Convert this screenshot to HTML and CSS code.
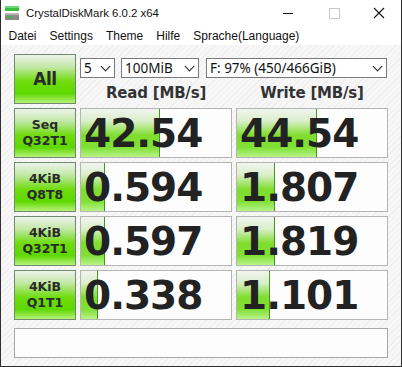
FILE: index.html
```html
<!DOCTYPE html>
<html lang="de">
<head>
    <meta charset="UTF-8">
    <title>CrystalDiskMark 6.0.2 x64</title>
    <link rel="stylesheet" href="styles.css">
</head>
<body>
<div class="window">
    <div class="titlebar">
        <svg class="app-icon" width="16" height="16" viewBox="0 0 16 16">
            <rect x="1" y="1" width="14" height="5" fill="#3dbb3d"/>
            <rect x="1" y="1" width="14" height="2" fill="#6fd86f"/>
            <rect x="1" y="8" width="14" height="7" fill="#8a8a8a"/>
            <rect x="1" y="8" width="14" height="2" fill="#b8b8b8"/>
            <rect x="3" y="11" width="4" height="2" fill="#3dbb3d"/>
        </svg>
        <span class="title">CrystalDiskMark 6.0.2 x64</span>
        <div class="controls">
            <span class="ctl ctl-min"></span>
            <span class="ctl ctl-max"></span>
            <span class="ctl ctl-close">
                <svg width="12" height="12" viewBox="0 0 12 12"><path d="M1 1L11 11M11 1L1 11" stroke="#111" stroke-width="1.1"/></svg>
            </span>
        </div>
    </div>
    <div class="menubar">
        <span>Datei</span>
        <span>Settings</span>
        <span>Theme</span>
        <span>Hilfe</span>
        <span>Sprache(Language)</span>
    </div>

    <div class="main">
        <div class="grid">
            <button class="btn btn-all">All</button>
            <div class="head">
                <div class="selects">
                    <div class="select sel-count">5<span class="chev"></span></div>
                    <div class="select sel-size">100MiB<span class="chev"></span></div>
                    <div class="select sel-drive">F: 97% (450/466GiB)<span class="chev"></span></div>
                </div>
                <div class="labels">
                    <div class="label">Read [MB/s]</div>
                    <div class="label">Write [MB/s]</div>
                </div>
            </div>

            <button class="btn">Seq<br>Q32T1</button>
            <div class="cell"><div class="bar" style="width:78px"></div><span class="val">42.54</span></div>
            <div class="cell"><div class="bar" style="width:79px"></div><span class="val">44.54</span></div>

            <button class="btn">4KiB<br>Q8T8</button>
            <div class="cell"><div class="bar" style="width:23px"></div><span class="val">0.594</span></div>
            <div class="cell"><div class="bar" style="width:37px"></div><span class="val">1.807</span></div>

            <button class="btn">4KiB<br>Q32T1</button>
            <div class="cell"><div class="bar" style="width:23px"></div><span class="val">0.597</span></div>
            <div class="cell"><div class="bar" style="width:37px"></div><span class="val">1.819</span></div>

            <button class="btn">4KiB<br>Q1T1</button>
            <div class="cell"><div class="bar" style="width:16px"></div><span class="val">0.338</span></div>
            <div class="cell"><div class="bar" style="width:32px"></div><span class="val">1.101</span></div>
        </div>
        <div class="status"></div>
    </div>
</div>
</body>
</html>
```

FILE: styles.css
```css
body {
    margin: 0;
    font-family: "Liberation Sans", Arial, sans-serif;
}
.window {
    width: 402px;
    height: 367px;
    box-sizing: border-box;
    border: 1px solid #2e2e2e;
    border-top: none;
    background: repeating-linear-gradient(135deg, #f7f7f7 0, #f7f7f7 3px, #efefef 3px, #efefef 4px);
}
.titlebar {
    height: 26px;
    background: #fff;
    display: flex;
    align-items: center;
}
.app-icon {
    margin-left: 3px;
    margin-right: 6px;
}
.title {
    font-size: 11.4px;
    color: #111;
}
.controls {
    margin-left: auto;
    display: flex;
    height: 26px;
}
.ctl {
    width: 46px;
    display: flex;
    align-items: center;
    justify-content: center;
}
.ctl-min::before {
    content: "";
    width: 10px;
    height: 1px;
    background: #111;
}
.ctl-max::before {
    content: "";
    width: 9px;
    height: 9px;
    border: 1px solid #c8c8c8;
}
.ctl-close {
    width: 44px;
}
.menubar {
    height: 19px;
    background: #fff;
    display: flex;
    align-items: center;
    font-size: 12px;
    color: #111;
    padding-left: 1px;
}
.menubar span {
    padding: 0 6.5px;
}
.main {
    padding: 9px 0 0 13px;
}
.grid {
    display: grid;
    grid-template-columns: 62px 152px 152px;
    grid-auto-rows: 50px;
    gap: 4px;
}
.btn {
    margin: 0;
    padding: 0;
    border: 1px solid #6f8a6f;
    background: linear-gradient(to bottom, #edf3ea 0%, #c2e8a6 25%, #6fdc0e 55%, #5ed800 80%, #b6f27a 100%);
    font-family: "DejaVu Sans", sans-serif;
    font-weight: bold;
    font-size: 12.5px;
    line-height: 16px;
    color: #2a2a2a;
}
.btn-all {
    font-size: 17px;
    letter-spacing: -0.5px;
}
.head {
    grid-column: span 2;
    display: flex;
    flex-direction: column;
}
.selects {
    display: flex;
    margin-top: 4px;
    height: 20px;
}
.select {
    box-sizing: border-box;
    height: 20px;
    border: 1px solid #7a7a7a;
    background: #fff;
    font-family: "Noto Sans", sans-serif;
    font-size: 13.5px;
    line-height: 18px;
    padding-left: 3px;
    color: #111;
    position: relative;
}
.chev {
    position: absolute;
    right: 5px;
    top: 4px;
    width: 6px;
    height: 6px;
    border-right: 1.5px solid #222;
    border-bottom: 1.5px solid #222;
    transform: rotate(45deg);
}
.sel-count {
    width: 35px;
    margin-right: 6px;
}
.sel-size {
    width: 78px;
    margin-right: 7px;
}
.sel-drive {
    width: 181px;
}
.labels {
    display: flex;
    gap: 4px;
    margin-top: 6px;
}
.label {
    width: 152px;
    text-align: center;
    font-family: "DejaVu Sans", sans-serif;
    font-weight: bold;
    font-size: 15px;
    color: #333;
    letter-spacing: -0.2px;
}
.cell {
    position: relative;
    box-sizing: border-box;
    border: 1px solid #b4b4b4;
    background: #fdfdfd;
    display: flex;
    align-items: center;
    overflow: hidden;
}
.bar {
    position: absolute;
    left: 0;
    top: 0;
    bottom: 0;
    border-right: 1px solid #3f9a1c;
    background: linear-gradient(to bottom, #f2f4f0 0%, #d9efc9 25%, #7fdd2e 55%, #80e035 80%, #b8f288 100%);
}
.val {
    position: relative;
    padding-left: 3px;
    font-family: "DejaVu Sans", sans-serif;
    font-weight: bold;
    font-size: 39px;
    letter-spacing: -1px;
    color: #222;
}
.status {
    margin-top: 8px;
    width: 374px;
    height: 30px;
    box-sizing: border-box;
    border: 1px solid #a8a8a8;
    background: #fdfdfd;
}
```
